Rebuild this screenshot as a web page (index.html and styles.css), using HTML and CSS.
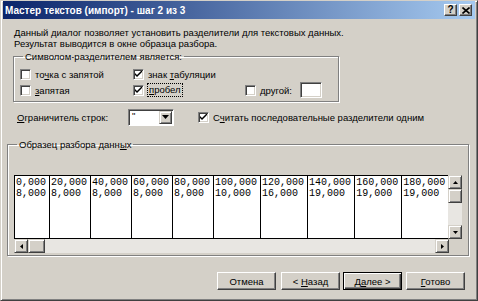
FILE: index.html
```html
<!DOCTYPE html>
<html lang="ru">
<head>
  <meta charset="UTF-8">
  <title>Мастер текстов (импорт) - шаг 2 из 3</title>
  <link rel="stylesheet" href="styles.css">
</head>
<body>
  <div class="window">
    <div class="titlebar">
      <span class="title">Мастер текстов (импорт) - шаг 2 из 3</span>
      <div class="caption-buttons">
        <span class="cap-btn">?</span>
        <span class="cap-btn">
          <svg width="8" height="7" viewBox="0 0 8 7"><path d="M0.5 0.5 L7.5 6.5 M7.5 0.5 L0.5 6.5" stroke="#000" stroke-width="1.6"/></svg>
        </span>
      </div>
    </div>

    <div class="content">
      <p class="intro">Данный диалог позволяет установить разделители для текстовых данных.<br>Результат выводится в окне образца разбора.</p>

      <fieldset class="group delims">
        <legend>Символом-разделителем является:</legend>
        <div class="delim-grid">
          <label class="check"><span class="box"></span><span>то<u>ч</u>ка с запятой</span></label>
          <label class="check"><span class="box"><svg width="7" height="7" viewBox="0 0 7 7"><path d="M0 2 L0 4 L2 6 L7 1 L7 -1 L2 4 Z" fill="#000"/></svg></span><span>знак <u>т</u>абуляции</span></label>
          <span></span>
          <label class="check"><span class="box"></span><span><u>з</u>апятая</span></label>
          <label class="check"><span class="box"><svg width="7" height="7" viewBox="0 0 7 7"><path d="M0 2 L0 4 L2 6 L7 1 L7 -1 L2 4 Z" fill="#000"/></svg></span><span class="focus"><u>п</u>робел</span></label>
          <label class="check"><span class="box"></span><span><u>д</u>ругой:</span><span class="field other"></span></label>
        </div>
      </fieldset>

      <div class="options">
        <span class="opt-label"><u>О</u>граничитель строк:</span>
        <div class="combo">
          <span class="combo-text">"</span>
          <span class="combo-btn"><svg width="7" height="4" viewBox="0 0 7 4"><path d="M0 0 L7 0 L3.5 4 Z" fill="#000"/></svg></span>
        </div>
        <label class="check"><span class="box"><svg width="7" height="7" viewBox="0 0 7 7"><path d="M0 2 L0 4 L2 6 L7 1 L7 -1 L2 4 Z" fill="#000"/></svg></span><span>С<u>ч</u>итать последовательные разделители одним</span></label>
      </div>

      <fieldset class="group preview">
        <legend>Образец разбора данн<u>ы</u>х</legend>
        <div class="frame">
          <div class="data-row">
            <div class="table">
              <div class="col">0,000<br>8,000</div>
              <div class="col">20,000<br>8,000</div>
              <div class="col">40,000<br>8,000</div>
              <div class="col">60,000<br>8,000</div>
              <div class="col">80,000<br>8,000</div>
              <div class="col">100,000<br>10,000</div>
              <div class="col">120,000<br>16,000</div>
              <div class="col">140,000<br>19,000</div>
              <div class="col">160,000<br>19,000</div>
              <div class="col">180,000<br>19,000</div>
            </div>
            <div class="vscroll">
              <span class="sb-btn"><svg width="5" height="3" viewBox="0 0 5 3"><path d="M0 3 L5 3 L2.5 0 Z" fill="#000"/></svg></span>
              <span class="sb-thumb"></span>
              <span class="sb-track"></span>
              <span class="sb-btn"><svg width="5" height="3" viewBox="0 0 5 3"><path d="M0 0 L5 0 L2.5 3 Z" fill="#000"/></svg></span>
            </div>
          </div>
          <div class="data-row">
            <div class="hscroll">
              <span class="sb-btn"><svg width="3" height="5" viewBox="0 0 3 5"><path d="M3 0 L3 5 L0 2.5 Z" fill="#000"/></svg></span>
              <span class="sb-thumb"></span>
              <span class="sb-track"></span>
              <span class="sb-btn"><svg width="3" height="5" viewBox="0 0 3 5"><path d="M0 0 L0 5 L3 2.5 Z" fill="#000"/></svg></span>
            </div>
            <span class="corner"></span>
          </div>
        </div>
      </fieldset>

      <div class="buttons">
        <span class="btn"><span>Отмена</span></span>
        <span class="btn back"><span>&lt; <u>Н</u>азад</span></span>
        <span class="btn default"><span>Д<u>а</u>лее &gt;</span></span>
        <span class="btn finish"><span><u>Г</u>отово</span></span>
      </div>
    </div>
  </div>
</body>
</html>
```

FILE: styles.css
```css
body {
  margin: 0;
  font-family: "Liberation Sans", Arial, sans-serif;
  font-size: 9.5px;
  color: #000;
  background: #d4d0c8;
}
u {
  text-decoration-thickness: 1px;
  text-underline-offset: 1px;
}
.window {
  width: 478px;
  height: 301px;
  box-sizing: border-box;
  background: #d4d0c8;
  border: 1px solid;
  border-color: #d4d0c8 #404040 #404040 #d4d0c8;
  box-shadow: inset 1px 1px #fff, inset -1px -1px #808080;
  padding: 0 2px 2px 2px;
  display: flex;
  flex-direction: column;
}
.titlebar {
  height: 18px;
  flex: none;
  display: flex;
  align-items: center;
  justify-content: space-between;
  padding: 0 3px 0 2px;
  background: linear-gradient(to right, #0a246a, #a6caf0);
  color: #fff;
  font-size: 10px;
  font-weight: bold;
}
.caption-buttons {
  display: flex;
  gap: 2px;
}
.cap-btn {
  width: 11px;
  height: 10px;
  display: flex;
  align-items: center;
  justify-content: center;
  background: #d4d0c8;
  color: #000;
  font-size: 10px;
  line-height: 10px;
  border: 1px solid;
  border-color: #fff #404040 #404040 #fff;
  box-shadow: inset -1px -1px #808080;
}

.content {
  flex: 1;
  display: flex;
  flex-direction: column;
}
.intro {
  margin: 8px 0 0 11px;
  line-height: 11px;
}

/* group boxes */
.group {
  margin: 2px 0 0 10px;
  padding: 0;
  border: 1px solid #808080;
  box-shadow: inset 1px 1px #fff, 1px 1px #fff;
  min-width: 0;
}
.group legend {
  padding: 0 2px;
  margin-left: 3px;
  line-height: 11px;
}
.delims {
  width: 318px;
  padding: 5px 0 4px 6px;
}
.delim-grid {
  display: grid;
  grid-template-columns: 113px 112px auto;
  row-gap: 2px;
}
.check {
  display: flex;
  align-items: center;
  gap: 4px;
  height: 14px;
  white-space: nowrap;
}
.box {
  width: 9px;
  height: 9px;
  flex: none;
  display: flex;
  align-items: center;
  justify-content: center;
  background: #fff;
  border: 1px solid;
  border-color: #808080 #fff #fff #808080;
  box-shadow: inset 1px 1px #404040, inset -1px -1px #d4d0c8;
}
.focus {
  outline: 1px dotted #000;
  padding: 1px 1px;
  line-height: 10px;
}
.field {
  display: inline-block;
  background: #fff;
  border: 1px solid;
  border-color: #808080 #fff #fff #808080;
  box-shadow: inset 1px 1px #404040, inset -1px -1px #d4d0c8;
}
.other {
  width: 20px;
  height: 14px;
  margin-left: 4px;
}

/* line terminator row */
.options {
  display: flex;
  align-items: center;
  height: 16px;
  margin: 7px 0 0 14px;
}
.opt-label {
  width: 111px;
}
.combo {
  width: 40px;
  height: 14px;
  display: flex;
  justify-content: space-between;
  background: #fff;
  border: 1px solid;
  border-color: #808080 #fff #fff #808080;
  box-shadow: inset 1px 1px #404040;
  padding: 1px 1px 0 3px;
  margin-right: 24px;
}
.combo-text {
  line-height: 9px;
}
.combo-btn {
  width: 11px;
  height: 11px;
  display: flex;
  align-items: center;
  justify-content: center;
  background: #d4d0c8;
  border: 1px solid;
  border-color: #d4d0c8 #404040 #404040 #d4d0c8;
  box-shadow: inset 1px 1px #fff, inset -1px -1px #808080;
}

/* data preview */
.preview {
  width: 454px;
  margin: 14px 0 0 4px;
  padding: 25px 0 2px 6px;
}
.frame {
  display: flex;
  flex-direction: column;
  width: 448px;
}
.data-row {
  display: flex;
}
.table {
  width: 434px;
  height: 62px;
  display: flex;
  overflow: hidden;
  background: #fff;
  border: 1px solid #000;
  border-right: none;
  color: #000;
  font-family: "Liberation Mono", "Courier New", monospace;
  font-size: 10px;
  line-height: 11px;
}
.col {
  flex: none;
  padding: 1px 3px 0 1px;
  border-right: 1px solid #000;
  white-space: nowrap;
}
.vscroll {
  width: 14px;
  display: flex;
  flex-direction: column;
  background: #e8e6e2;
}
.hscroll {
  width: 435px;
  height: 14px;
  display: flex;
  background: #e8e6e2;
}
.sb-btn,
.sb-thumb {
  flex: none;
  width: 12px;
  height: 12px;
  display: flex;
  align-items: center;
  justify-content: center;
  background: #d4d0c8;
  border: 1px solid;
  border-color: #d4d0c8 #404040 #404040 #d4d0c8;
  box-shadow: inset 1px 1px #fff, inset -1px -1px #808080;
}
.hscroll .sb-thumb {
  width: 15px;
}
.sb-track {
  flex: 1;
}
.corner {
  flex: 1;
  background: #d4d0c8;
}

/* wizard buttons */
.buttons {
  display: flex;
  justify-content: flex-end;
  margin: 16px 10px 0 0;
}
.btn {
  width: 57px;
  height: 16px;
  display: flex;
  align-items: center;
  justify-content: center;
  background: #d4d0c8;
  border: 1px solid;
  border-color: #fff #404040 #404040 #fff;
  box-shadow: inset -1px -1px #808080;
}
.back {
  margin-left: 5px;
}
.default {
  margin-left: 3px;
  border-color: #000;
  box-shadow: inset 1px 1px #fff, inset -1px -1px #404040, inset -2px -2px #808080;
}
.finish {
  margin-left: 4px;
}
```
